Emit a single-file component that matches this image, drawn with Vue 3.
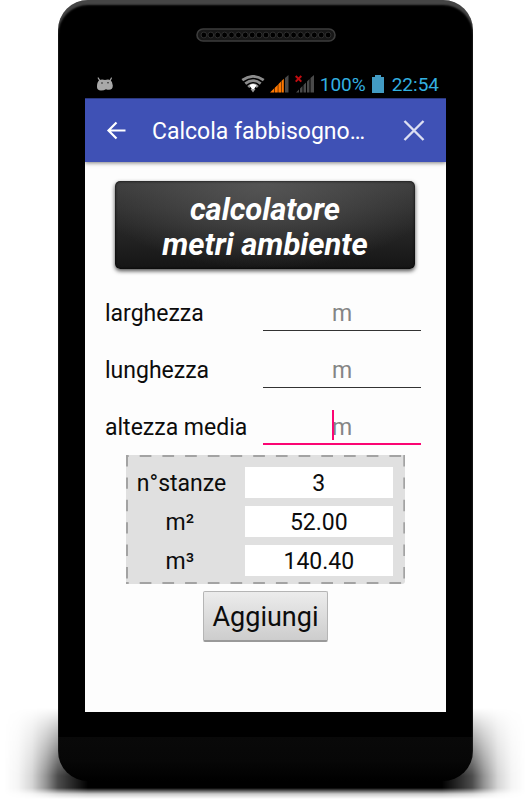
<template>
  <div class="stage">
    <div class="floor-shadow" aria-hidden="true"></div>
    <main class="phone">
      <svg class="speaker" viewBox="0 0 140 14" aria-hidden="true">
        <rect x="1" y="1" width="138" height="12" rx="6" fill="#171717" stroke="#3c3c3c" stroke-width="1.6" />
        <circle
          v-for="n in 19"
          :key="n"
          :cx="1 + n * 6.9"
          cy="7"
          r="2.9"
          fill="#000"
          stroke="#303030"
          stroke-width="1"
        />
      </svg>

      <div class="status-bar">
        <svg class="icon-robot" width="18" height="14" viewBox="0 0 18 14" aria-hidden="true">
          <path d="M2.2 1l1.6 2.6M15.4 1l-1.2 2.6" stroke="#a9a9a9" stroke-width="1.2" stroke-linecap="round" />
          <path d="M3.500 3Q6 2.200 9 3q3.500-1 5.500.2 2.500 1.800 2.300 5.300 0 4.300-3.800 4.300-1.800 0-3-.6-2 1.200-5 1.200Q1 13.400 1 10 .8 5 3.500 3z" fill="#a9a9a9" />
          <circle cx="6" cy="6" r=".8" fill="#222" />
          <circle cx="12" cy="5.700" r=".8" fill="#222" />
        </svg>
        <span class="status-gap"></span>
        <svg class="icon-wifi" width="24" height="18" viewBox="0 0 24 18" aria-hidden="true">
          <g fill="none" stroke="#8c8c8c" stroke-width="2.8">
            <path d="M1.300 5.200Q12-2.400 22.700 5.200" />
            <path d="M4.300 8.700Q12 2.500 19.700 8.700" />
            <path d="M7.200 12Q12 7.500 16.800 12" />
          </g>
          <path d="M8.500 10.200Q12 8 15.500 10.200L12 16z" fill="#fff" />
          <path d="M9.500 14l2.500 3.500 2.500-3.500z" fill="#999" />
        </svg>
        <svg class="icon-signal" width="19" height="18" viewBox="0 0 19 18" aria-hidden="true">
          <path d="M0 17.500L4 13.500v4zM4.600 13l3.200-3.200v7.700H4.600zM8.300 9.200L11 6.500v11H8.300zM11.500 6l2.300-2.300v13.800h-2.300z" fill="#ff7800" />
          <path d="M15 3l3.500-3v17.500H15z" fill="#4a4a4a" />
        </svg>
        <svg class="icon-signal" width="19" height="18" viewBox="0 0 19 18" aria-hidden="true">
          <path d="M1 17.500L4 14.500v3zM5 13.500l2.500-2.500v6.500H5zM8.500 10L11 7.500v10H8.500zM12 6.500l2.500-2.500v13.500H12zM15.500 3L19 0v17.500h-3.500z" fill="#4a4a4a" />
          <path d="M.7 1l5.600 5.600M6.300 1L.7 6.600" stroke="#c00c10" stroke-width="2" />
        </svg>
        <span class="status-text">100%</span>
        <svg class="icon-battery" width="12" height="18" viewBox="0 0 12 18" aria-hidden="true">
          <path d="M3 0h6v2h3v16H0V2h3z" fill="#429bc3" />
        </svg>
        <span class="status-text">22:54</span>
      </div>

      <div class="screen">
        <header class="toolbar">
          <button type="button" class="icon-button" aria-label="Indietro">
            <svg width="20" height="20" viewBox="0 0 20 20" aria-hidden="true">
              <path d="M10.500 1.500L2.500 9.500l8 8M2.500 9.500h17" fill="none" stroke="#fff" stroke-width="2.2" />
            </svg>
          </button>
          <h1 class="toolbar-title">Calcola fabbisogno…</h1>
          <button type="button" class="icon-button" aria-label="Chiudi">
            <svg width="22" height="22" viewBox="0 0 22 22" aria-hidden="true">
              <path d="M1.500 1l19 19M20.500 1l-19 19" stroke="#dcdff2" stroke-width="2.400" />
            </svg>
          </button>
        </header>

        <form class="content" @submit.prevent="addRoom">
          <h2 class="banner">calcolatore<br />metri ambiente</h2>

          <div class="fields">
            <div v-for="field in fields" :key="field.id" class="field">
              <label :for="field.id">{{ field.label }}</label>
              <div :class="['field-box', { 'field-box-active': field.id === active }]">
                <input
                  :id="field.id"
                  v-model="field.value"
                  placeholder="m"
                  inputmode="decimal"
                  @focus="active = field.id"
                />
                <span v-if="field.id === active && !field.value" class="caret" aria-hidden="true"></span>
              </div>
            </div>
          </div>

          <div class="summary">
            <svg class="summary-frame" aria-hidden="true">
              <g stroke="#a3a3a3" stroke-width="4">
                <line x1="0" y1="0" x2="100%" y2="0" stroke-dasharray="11.700 11" stroke-dashoffset="9" />
                <line x1="0" y1="100%" x2="100%" y2="100%" stroke-dasharray="11.700 11" stroke-dashoffset="9" />
                <line x1="0" y1="0" x2="0" y2="100%" stroke-dasharray="11.400 11" />
                <line x1="100%" y1="0" x2="100%" y2="100%" stroke-dasharray="11.400 11" />
              </g>
            </svg>
            <div v-for="total in totals" :key="total.id" class="summary-row">
              <label :for="total.id">{{ total.label }}</label>
              <output :id="total.id">{{ total.value }}</output>
            </div>
          </div>

          <button type="submit" class="add-button">Aggiungi</button>
        </form>
      </div>
    </main>
  </div>
</template>

<script setup>
import { computed, reactive, ref } from 'vue'

const fields = reactive([
  { id: 'larghezza', label: 'larghezza', value: '' },
  { id: 'lunghezza', label: 'lunghezza', value: '' },
  { id: 'altezza', label: 'altezza media', value: '' },
])

const active = ref('altezza')
const rooms = ref(3)
const area = ref(52)
const volume = ref(140.4)

const totals = computed(() => [
  { id: 'stanze', label: 'n°stanze', value: rooms.value },
  { id: 'area', label: 'm²', value: area.value.toFixed(2) },
  { id: 'volume', label: 'm³', value: volume.value.toFixed(2) },
])

function addRoom() {
  const [width, length, height] = fields.map((field) => parseFloat(field.value.replace(',', '.')))
  if (!width || !length || !height) return
  rooms.value += 1
  area.value += width * length
  volume.value += width * length * height
  fields.forEach((field) => {
    field.value = ''
  })
}
</script>

<style>
body {
  background: #fff;
}
</style>

<style scoped>
.stage {
  position: relative;
  padding: 0 57px 19px 58px;
  font-family: Roboto, "Noto Sans", sans-serif;
  color: #0c0c0c;
}

.floor-shadow {
  position: absolute;
  left: 4px;
  right: 4px;
  bottom: 0;
  height: 92px;
  background: linear-gradient(
    90deg,
    transparent 0,
    rgba(0, 0, 0, 0.04) 14px,
    rgba(0, 0, 0, 0.16) 28px,
    rgba(0, 0, 0, 0.42) 42px,
    rgba(0, 0, 0, 0.7) 54px,
    #000 84px,
    #000 calc(100% - 84px),
    rgba(0, 0, 0, 0.7) calc(100% - 54px),
    rgba(0, 0, 0, 0.42) calc(100% - 42px),
    rgba(0, 0, 0, 0.16) calc(100% - 28px),
    rgba(0, 0, 0, 0.04) calc(100% - 14px),
    transparent 100%
  );
  mask-image: linear-gradient(transparent 0, rgba(0, 0, 0, 0.35) 22px, #000 68px, #000 80px, rgba(0, 0, 0, 0.2) 86px, transparent 91px);
}

.phone {
  position: relative;
  display: flex;
  flex-direction: column;
  padding: 28px 27px 69px;
  border-radius: 30px;
  background: linear-gradient(transparent calc(100% - 44px), #090909 calc(100% - 44px), #070707 calc(100% - 20px), #000 100%), #000;
  box-shadow: inset 0 5px 2px #454545;
}

.speaker {
  align-self: center;
  width: 140px;
  height: 14px;
}

.status-bar {
  display: flex;
  align-items: center;
  height: 28px;
  margin-top: 28px;
  padding: 0 7px 0 11px;
}

.status-gap {
  flex: 1;
}

.icon-wifi {
  margin-right: 5px;
}

.icon-signal {
  margin-right: 6px;
}

.icon-battery {
  margin: 0 8px 0 6px;
}

.status-text {
  padding-top: 2px;
  color: #33b0e0;
  font-size: 19px;
  line-height: 24px;
}

.screen {
  background: #fdfdfd;
}

.toolbar {
  display: flex;
  align-items: center;
  box-sizing: border-box;
  height: 64px;
  padding: 2px 21px 0;
  background: #3f51b5;
  box-shadow: inset 0 1px #2c397f, 0 1px 4px rgba(0, 0, 0, 0.5);
}

.icon-button {
  display: flex;
  padding: 0;
  border: 0;
  background: none;
}

.toolbar-title {
  flex: 1;
  min-width: 0;
  margin: 0 10px 0 26px;
  padding-top: 2px;
  overflow: hidden;
  color: #fff;
  font-size: 23px;
  font-weight: 400;
  line-height: 32px;
  white-space: nowrap;
}

.content {
  display: flex;
  flex-direction: column;
  align-items: center;
  padding: 19px 20px 70px;
}

.banner {
  align-self: stretch;
  margin: 0 11px 0 10px;
  padding: 11px 0 7px;
  border-radius: 5px;
  background: radial-gradient(ellipse 60% 100% at 50% 0, #555, transparent), linear-gradient(#3c3c3c, #151515);
  box-shadow: inset 0 0 3px #000, 0 2px 4px rgba(0, 0, 0, 0.7);
  color: #fff;
  font-size: 31px;
  font-style: italic;
  font-weight: 700;
  line-height: 35px;
  text-align: center;
}

.fields {
  align-self: stretch;
  margin-right: 5px;
}

.field {
  display: flex;
  justify-content: space-between;
  height: 36px;
  margin-top: 21px;
  font-size: 23px;
  line-height: 38px;
}

.field:first-child {
  margin-top: 26px;
}

.field-box {
  position: relative;
  width: 50%;
  height: 35px;
  border-bottom: 1px solid #333;
}

.field-box-active {
  height: 34px;
  border-bottom: 2px solid #fb0573;
}

.field-box input {
  display: block;
  box-sizing: border-box;
  width: 100%;
  height: 34px;
  padding: 2px 0 0;
  border: 0;
  outline: 0;
  background: none;
  color: #0c0c0c;
  font: inherit;
  line-height: 30px;
  text-align: center;
  caret-color: #fb0573;
}

.field-box input::placeholder {
  color: #858585;
  opacity: 1;
}

.caret {
  position: absolute;
  top: 1px;
  left: calc(50% - 10px);
  width: 2px;
  height: 30px;
  background: #fb0573;
}

.field-box input:focus + .caret {
  display: none;
}

.summary {
  position: relative;
  display: flex;
  flex-direction: column;
  gap: 8px;
  box-sizing: border-box;
  width: 87%;
  margin-top: 10px;
  padding: 12px 12px 8px 11px;
  border-radius: 3px;
  background: #e0e0e0;
}

.summary-frame {
  position: absolute;
  inset: 0;
  width: 100%;
  height: 100%;
}

.summary-row {
  display: flex;
  justify-content: space-between;
  font-size: 23px;
  line-height: 28px;
  text-align: center;
}

.summary-row label {
  width: 86px;
  padding-top: 3px;
}

.summary-row output {
  width: 58%;
  padding-top: 3px;
  background: #fff;
}

.add-button {
  margin-top: 7px;
  padding: 3px 8px 0;
  border: 1px solid #b5b5b5;
  border-bottom: 2px solid #999;
  border-radius: 2px;
  background: linear-gradient(#ececec, #cdcdcd);
  color: #0c0c0c;
  font: 27px/45px Roboto, "Noto Sans", sans-serif;
}
</style>
